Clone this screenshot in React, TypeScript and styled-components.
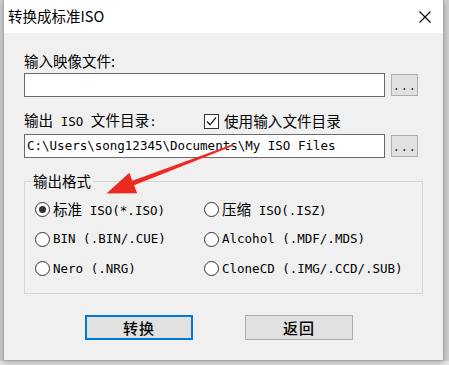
import styled, { createGlobalStyle } from 'styled-components'

const GlobalStyle = createGlobalStyle`
  html, body {
    margin: 0;
    padding: 0;
  }
  body {
    width: 449px;
    height: 365px;
    overflow: hidden;
    background: #cfcfcf;
    font-family: 'Noto Sans CJK SC', sans-serif;
    color: #000;
  }
`

const MONO = `'DejaVu Sans Mono', 'Liberation Mono', 'Noto Sans CJK SC', monospace`

const formats = [
  { id: 'iso', han: '标准', rest: ' ISO(*.ISO)' },
  { id: 'isz', han: '压缩', rest: ' ISO(.ISZ)' },
  { id: 'bin', rest: 'BIN (.BIN/.CUE)' },
  { id: 'mdf', rest: 'Alcohol (.MDF/.MDS)' },
  { id: 'nrg', rest: 'Nero (.NRG)' },
  { id: 'img', rest: 'CloneCD (.IMG/.CCD/.SUB)' }
]

const App = () => {
  const selected = 'iso'

  return (
    <Page>
      <GlobalStyle />
      <Window>
        <TitleBar>
          <Title>转换成标准ISO</Title>
          <CloseButton>
            <svg width="12" height="12" viewBox="0 0 12 12">
              <path d="M0.5 0.5 L11.5 11.5 M11.5 0.5 L0.5 11.5" stroke="#000" strokeWidth="1.1" />
            </svg>
          </CloseButton>
        </TitleBar>
        <Body>
          <FieldLabel>输入映像文件:</FieldLabel>
          <InputRow $gap={2}>
            <TextBox />
            <BrowseButton>...</BrowseButton>
          </InputRow>
          <LabelRow>
            <MixedLabel>
              <Han>输出</Han> ISO <Han>文件目录</Han>:
            </MixedLabel>
            <CheckLabel>
              <CheckBox>
                <svg width="11" height="11" viewBox="0 0 11 11">
                  <path d="M1 5.5 L4 8.8 L10 1.5" fill="none" stroke="#222" strokeWidth="1.3" />
                </svg>
              </CheckBox>
              <Han>使用输入文件目录</Han>
            </CheckLabel>
          </LabelRow>
          <InputRow $gap={3}>
            <TextBox>C:\Users\song12345\Documents\My ISO Files</TextBox>
            <BrowseButton>...</BrowseButton>
          </InputRow>
          <GroupBox>
            <GroupTitle>输出格式</GroupTitle>
            <RadioGrid>
              {formats.map((f) => (
                <RadioItem key={f.id}>
                  <RadioCircle $checked={f.id === selected} />
                  <RadioText>
                    {f.han && <Han>{f.han}</Han>}
                    {f.rest}
                  </RadioText>
                </RadioItem>
              ))}
            </RadioGrid>
          </GroupBox>
          <ButtonRow>
            <DialogButton $primary>转换</DialogButton>
            <DialogButton>返回</DialogButton>
          </ButtonRow>
        </Body>
      </Window>
      <Arrow width="449" height="365" viewBox="0 0 449 365">
        <polygon
          points="232.6,144.2 132.3,180.7 129.3,172.7 106.5,193.4 137.1,193.3 134.1,185.3 233.4,145.8"
          fill="#ec2a22"
        />
      </Arrow>
    </Page>
  )
}

const Page = styled.div`
  position: relative;
  width: 449px;
  height: 365px;
  padding-left: 3px;
  box-sizing: border-box;
  background: linear-gradient(to bottom, #cfcfcf 0, #cfcfcf 361px, #e6e6e6 361px);
`

const Window = styled.div`
  width: 441px;
  height: 361px;
  box-sizing: border-box;
  background: #f0f0f0;
  border-left: 1px solid #a8a8a8;
  border-right: 1px solid #a8a8a8;
  border-bottom: 1px solid #a8a8a8;
  box-shadow: 0 2px 6px rgba(0, 0, 0, 0.25);
  display: flex;
  flex-direction: column;
`

const TitleBar = styled.div`
  height: 33px;
  flex-shrink: 0;
  background: #fff;
  display: flex;
  align-items: center;
  padding-left: 4px;
`

const Title = styled.div`
  font-size: 14.5px;
  line-height: 20px;
  margin-top: -1px;
`

const CloseButton = styled.div`
  margin-left: auto;
  width: 36px;
  height: 33px;
  display: flex;
  align-items: center;
  justify-content: center;
`

const Body = styled.div`
  display: flex;
  flex-direction: column;
  padding: 0 20px 0 20px;
`

const FieldLabel = styled.div`
  margin-top: 18px;
  height: 20px;
  font-size: 14.5px;
  line-height: 20px;
`

const Han = styled.span`
  font-family: 'Noto Sans CJK SC', sans-serif;
  font-size: 14.6px;
`

const InputRow = styled.div<{ $gap: number }>`
  margin-top: ${(p) => p.$gap}px;
  display: flex;
  align-items: center;
  gap: 6px;
`

const TextBox = styled.div`
  width: 361px;
  height: 24px;
  box-sizing: border-box;
  border: 1px solid #6a6a6a;
  background: #fff;
  padding-left: 2px;
  font-family: ${MONO};
  font-size: 12.5px;
  line-height: 22px;
  white-space: nowrap;
  overflow: hidden;
`

const BrowseButton = styled.div`
  width: 27px;
  height: 22px;
  box-sizing: border-box;
  border: 1px solid #adadad;
  background: #e1e1e1;
  font-family: ${MONO};
  font-size: 12.5px;
  line-height: 22px;
  text-align: center;
  color: #2a2a2a;
  letter-spacing: 0.5px;
`

const LabelRow = styled.div`
  margin-top: 14px;
  height: 20px;
  display: flex;
  align-items: center;
`

const MixedLabel = styled.div`
  width: 180px;
  font-family: ${MONO};
  font-size: 12.5px;
  line-height: 20px;
  white-space: pre;
`

const CheckLabel = styled.div`
  display: flex;
  align-items: center;
  gap: 5px;
  line-height: 20px;
`

const CheckBox = styled.span`
  width: 15px;
  height: 15px;
  box-sizing: border-box;
  border: 1px solid #333;
  background: #fff;
  display: flex;
  align-items: center;
  justify-content: center;
`

const GroupBox = styled.fieldset`
  margin: 15px 0 0 0;
  padding: 0 6px 9px 6px;
  border: 1px solid #d6d6d6;
  width: 399px;
  box-sizing: border-box;
  min-width: 0;
`

const GroupTitle = styled.legend`
  padding: 0 2px;
  font-size: 14.5px;
  line-height: 16px;
`

const RadioGrid = styled.div`
  margin: 6px 0 0 4px;
  display: grid;
  grid-template-columns: 169px 1fr;
  grid-auto-rows: 29.5px;
`

const RadioItem = styled.div`
  display: flex;
  align-items: center;
  gap: 3px;
`

const RadioCircle = styled.span<{ $checked?: boolean }>`
  width: 15px;
  height: 15px;
  box-sizing: border-box;
  border: 1px solid #333;
  border-radius: 50%;
  background: #fff;
  display: flex;
  align-items: center;
  justify-content: center;
  flex-shrink: 0;
  &::after {
    content: '';
    width: 7px;
    height: 7px;
    border-radius: 50%;
    background: ${(p) => (p.$checked ? '#333' : 'transparent')};
  }
`

const RadioText = styled.span`
  font-family: ${MONO};
  font-size: 12.5px;
  line-height: 20px;
  white-space: pre;
`

const ButtonRow = styled.div`
  margin-top: 21px;
  display: flex;
  gap: 52px;
  padding-left: 61px;
`

const DialogButton = styled.div<{ $primary?: boolean }>`
  width: 108px;
  height: 25px;
  box-sizing: border-box;
  background: #e1e1e1;
  border: ${(p) => (p.$primary ? '2px solid #0078d7' : '1px solid #adadad')};
  font-size: 15px;
  font-weight: 500;
  display: flex;
  align-items: center;
  justify-content: center;
  letter-spacing: 1px;
`

const Arrow = styled.svg`
  position: absolute;
  left: 0;
  top: 0;
  pointer-events: none;
`

export default App
